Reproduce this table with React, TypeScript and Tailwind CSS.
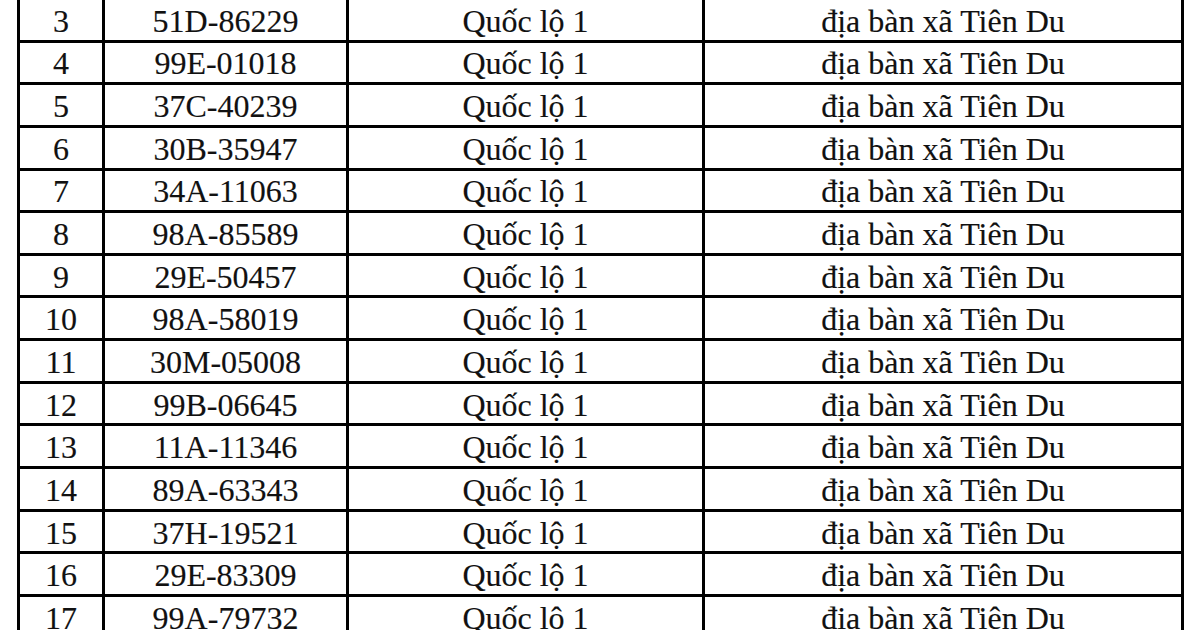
const rows: [number, string][] = [
  [3, "51D-86229"],
  [4, "99E-01018"],
  [5, "37C-40239"],
  [6, "30B-35947"],
  [7, "34A-11063"],
  [8, "98A-85589"],
  [9, "29E-50457"],
  [10, "98A-58019"],
  [11, "30M-05008"],
  [12, "99B-06645"],
  [13, "11A-11346"],
  [14, "89A-63343"],
  [15, "37H-19521"],
  [16, "29E-83309"],
  [17, "99A-79732"],
]

export default function App() {
  return (
    <div className="w-[1200px] h-[630px] overflow-hidden bg-white text-[#111] font-['Liberation_Serif','Times_New_Roman',serif] text-[32px] leading-none [-webkit-text-stroke:0.15px_#111]">
      <div className="ml-[17px] w-[1167px] border-l-[3px] border-black">
        {rows.map(([stt, plate]) => (
          <div key={stt} className="flex h-[42.65px] border-b-[3px] border-black">
            <div className="w-[85px] border-r-[3px] border-black flex items-center justify-center pt-[2px]">{stt}</div>
            <div className="w-[244px] border-r-[3px] border-black flex items-center justify-center pt-[2px]">{plate}</div>
            <div className="w-[356px] border-r-[3px] border-black flex items-center justify-center pt-[2px]">Quốc lộ 1</div>
            <div className="w-[479px] border-r-[3px] border-black flex items-center justify-center pt-[2px]">địa bàn xã Tiên Du</div>
          </div>
        ))}
      </div>
    </div>
  )
}
